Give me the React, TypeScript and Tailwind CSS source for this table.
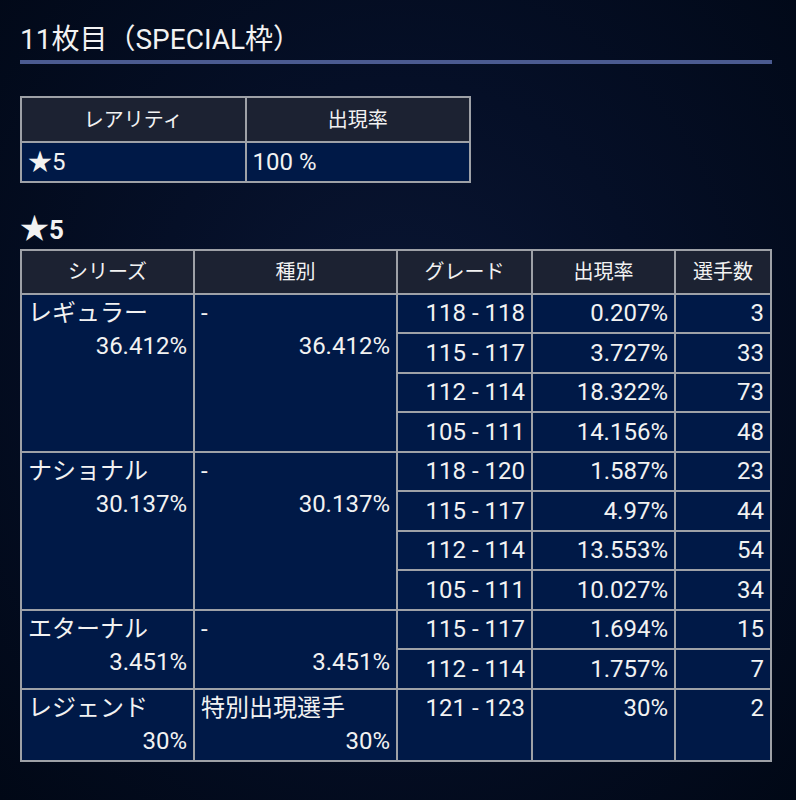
import React from 'react';

interface GradeRow {
  grade: string;
  rate: string;
  count: string;
}

interface SeriesGroup {
  series: string;
  seriesRate: string;
  kind: string;
  kindRate: string;
  rows: GradeRow[];
}

const groups: SeriesGroup[] = [
  {
    series: 'レギュラー',
    seriesRate: '36.412%',
    kind: '-',
    kindRate: '36.412%',
    rows: [
      { grade: '118 - 118', rate: '0.207%', count: '3' },
      { grade: '115 - 117', rate: '3.727%', count: '33' },
      { grade: '112 - 114', rate: '18.322%', count: '73' },
      { grade: '105 - 111', rate: '14.156%', count: '48' },
    ],
  },
  {
    series: 'ナショナル',
    seriesRate: '30.137%',
    kind: '-',
    kindRate: '30.137%',
    rows: [
      { grade: '118 - 120', rate: '1.587%', count: '23' },
      { grade: '115 - 117', rate: '4.97%', count: '44' },
      { grade: '112 - 114', rate: '13.553%', count: '54' },
      { grade: '105 - 111', rate: '10.027%', count: '34' },
    ],
  },
  {
    series: 'エターナル',
    seriesRate: '3.451%',
    kind: '-',
    kindRate: '3.451%',
    rows: [
      { grade: '115 - 117', rate: '1.694%', count: '15' },
      { grade: '112 - 114', rate: '1.757%', count: '7' },
    ],
  },
  {
    series: 'レジェンド',
    seriesRate: '30%',
    kind: '特別出現選手',
    kindRate: '30%',
    rows: [{ grade: '121 - 123', rate: '30%', count: '2' }],
  },
];

const th = 'border-2 border-[#9ea1a7] bg-[#1c2232] text-[20px] font-normal text-center align-middle';
const td = 'border-2 border-[#9ea1a7] bg-[#001947] px-[6px] pt-[2.5px] pb-[2px] text-[24px] leading-[33px] align-top';

export default function App() {
  return (
    <div
      className="min-h-screen bg-[radial-gradient(ellipse_at_50%_45%,#0a1634_0%,#050f27_45%,#010816_100%)] text-[#f2f2f2] pl-[20px] pr-[24px] pt-[22px] pb-10"
      style={{ fontFamily: 'Roboto, "Noto Sans CJK JP", sans-serif' }}
    >
      <h1 className="text-[28px] leading-[36px] pb-[2px] border-b-4 border-[#4b5b91]">11枚目（SPECIAL枠）</h1>

      {/* rarity table */}
      <table className="mt-[32px] w-[451px] table-fixed border-collapse">
        <thead>
          <tr className="h-[45px]">
            <th className={th}>レアリティ</th>
            <th className={th}>出現率</th>
          </tr>
        </thead>
        <tbody>
          <tr className="h-[39px]">
            <td className={td + ' align-middle'}>★5</td>
            <td className={td + ' align-middle'}>100 %</td>
          </tr>
        </tbody>
      </table>

      <h2 className="mt-[30px] mb-[3px] text-[26px] leading-[32px] font-bold">
        <span className="text-[29px]">★</span>5
      </h2>

      {/* detail table */}
      <table className="w-full table-fixed border-collapse">
        <colgroup>
          <col className="w-[173px]" />
          <col className="w-[203px]" />
          <col className="w-[135px]" />
          <col className="w-[143px]" />
          <col />
        </colgroup>
        <thead>
          <tr className="h-[44px]">
            <th className={th}>シリーズ</th>
            <th className={th}>種別</th>
            <th className={th}>グレード</th>
            <th className={th}>出現率</th>
            <th className={th}>選手数</th>
          </tr>
        </thead>
        <tbody>
          {groups.map((g) =>
            g.rows.map((r, i) => (
              <tr key={g.series + i} className="h-[39.5px]">
                {i === 0 && (
                  <>
                    <td className={td} rowSpan={g.rows.length}>
                      <div>{g.series}</div>
                      <div className="text-right">{g.seriesRate}</div>
                    </td>
                    <td className={td} rowSpan={g.rows.length}>
                      <div>{g.kind}</div>
                      <div className="text-right">{g.kindRate}</div>
                    </td>
                  </>
                )}
                <td className={td + ' text-right'}>{r.grade}</td>
                <td className={td + ' text-right'}>{r.rate}</td>
                <td className={td + ' text-right'}>{r.count}</td>
              </tr>
            ))
          )}
        </tbody>
      </table>
    </div>
  );
}
